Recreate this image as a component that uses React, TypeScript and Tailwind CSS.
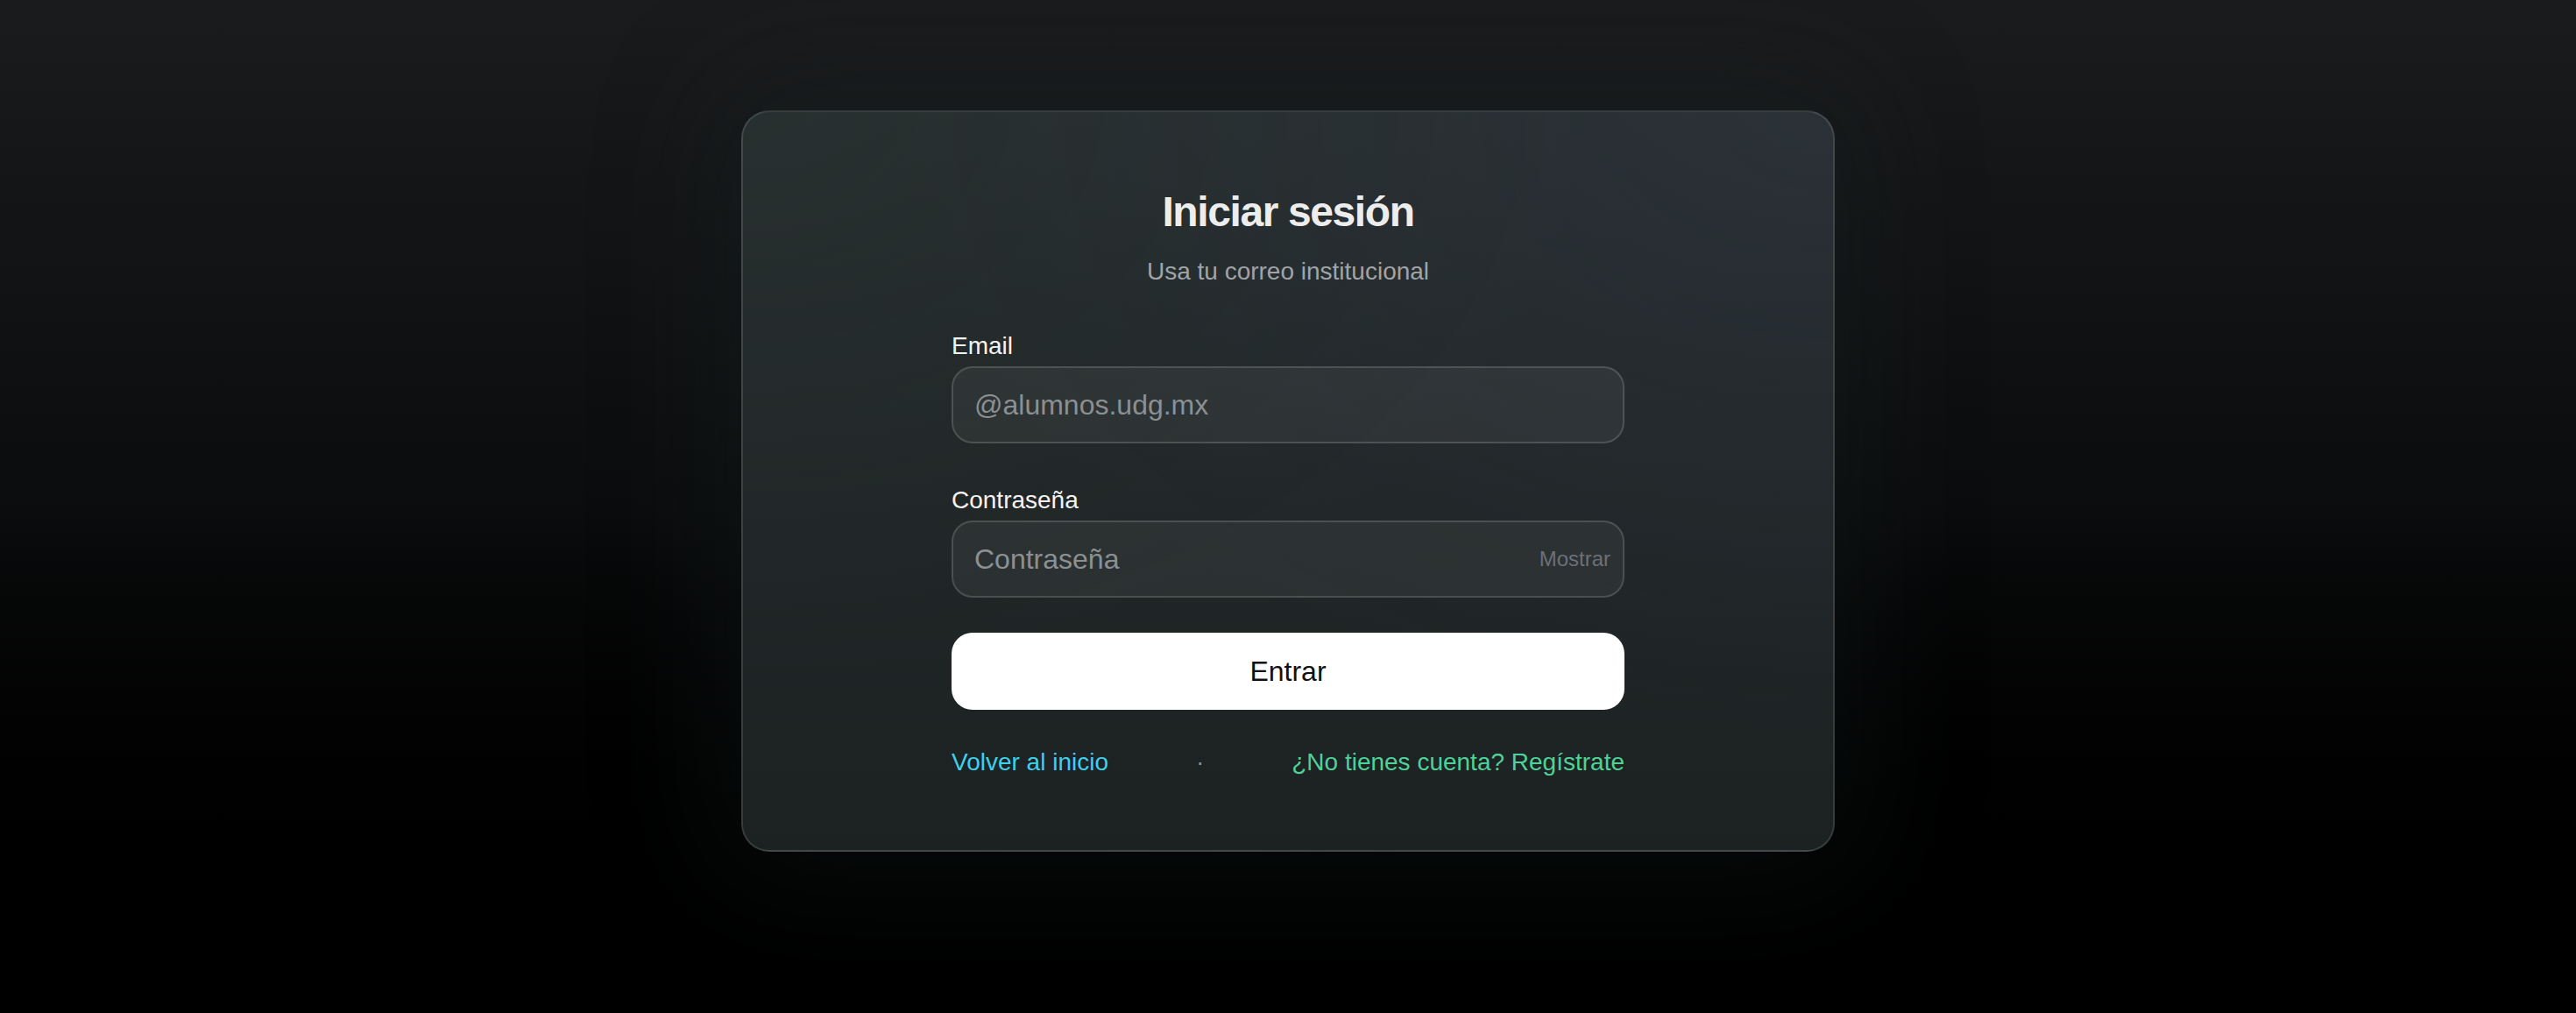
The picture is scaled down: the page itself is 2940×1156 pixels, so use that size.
import { useState } from "react";

export default function App() {
  const [email, setEmail] = useState("");
  const [password, setPassword] = useState("");
  const [show, setShow] = useState(false);

  return (
    <div className="min-h-[1156px] w-full bg-linear-to-b from-[#1a1b1d] via-[#0b0c0d] to-black font-['Liberation_Sans',Arial,sans-serif] flex justify-center pt-[126px]">
      <div className="w-[1248px] h-fit rounded-[32px] border-2 border-white/[0.12] bg-[radial-gradient(ellipse_at_top_right,rgba(60,70,95,0.2),transparent_60%),radial-gradient(ellipse_at_top_left,rgba(45,65,60,0.18),transparent_55%),linear-gradient(to_bottom,#262c2d,#1c2122)] shadow-[0_0_140px_30px_rgba(25,40,40,0.3)] pt-[82px] pb-[80px]">
        <div className="w-[768px] mx-auto">
          <h1 className="text-center text-[48px] leading-[64px] font-bold tracking-[-1.4px] text-[#ededed]">
            Iniciar sesión
          </h1>
          <p className="mt-[16px] text-center text-[28px] leading-[40px] text-[#a1a4a7]">
            Usa tu correo institucional
          </p>

          <form onSubmit={e => e.preventDefault()}>
            <label className="block mt-[45px] text-[28px] leading-[40px] text-[#f3f3f3]">Email</label>
            <input
              type="email"
              value={email}
              onChange={e => setEmail(e.target.value)}
              placeholder="@alumnos.udg.mx"
              className="mt-[3px] block w-full h-[88px] rounded-[24px] border-2 border-white/[0.15] bg-white/[0.05] px-[24px] text-[32px] text-white placeholder:text-[#8b9092] outline-none"
            />

            <label className="block mt-[45px] text-[28px] leading-[40px] text-[#f3f3f3]">Contraseña</label>
            <div className="relative mt-[3px]">
              <input
                type={show ? "text" : "password"}
                value={password}
                onChange={e => setPassword(e.target.value)}
                placeholder="Contraseña"
                className="block w-full h-[88px] rounded-[24px] border-2 border-white/[0.15] bg-white/[0.05] pl-[24px] pr-[120px] text-[32px] text-white placeholder:text-[#8b9092] outline-none"
              />
              <button
                type="button"
                onClick={() => setShow(s => !s)}
                className="absolute right-[16px] top-1/2 -translate-y-1/2 text-[24px] text-[#6b7078]"
              >
                Mostrar
              </button>
            </div>

            <button
              type="submit"
              className="mt-[40px] w-full h-[88px] rounded-[24px] bg-white text-[32px] text-[#111111]"
            >
              Entrar
            </button>
          </form>

          <div className="mt-[40px] flex items-center justify-between text-[28px] leading-[40px]">
            <a href="#" className="text-[#3fd0ea]">Volver al inicio</a>
            <span className="text-[#8a8f94]">·</span>
            <a href="#" className="text-[#4fd198]">¿No tienes cuenta? Regístrate</a>
          </div>
        </div>
      </div>
    </div>
  );
}
